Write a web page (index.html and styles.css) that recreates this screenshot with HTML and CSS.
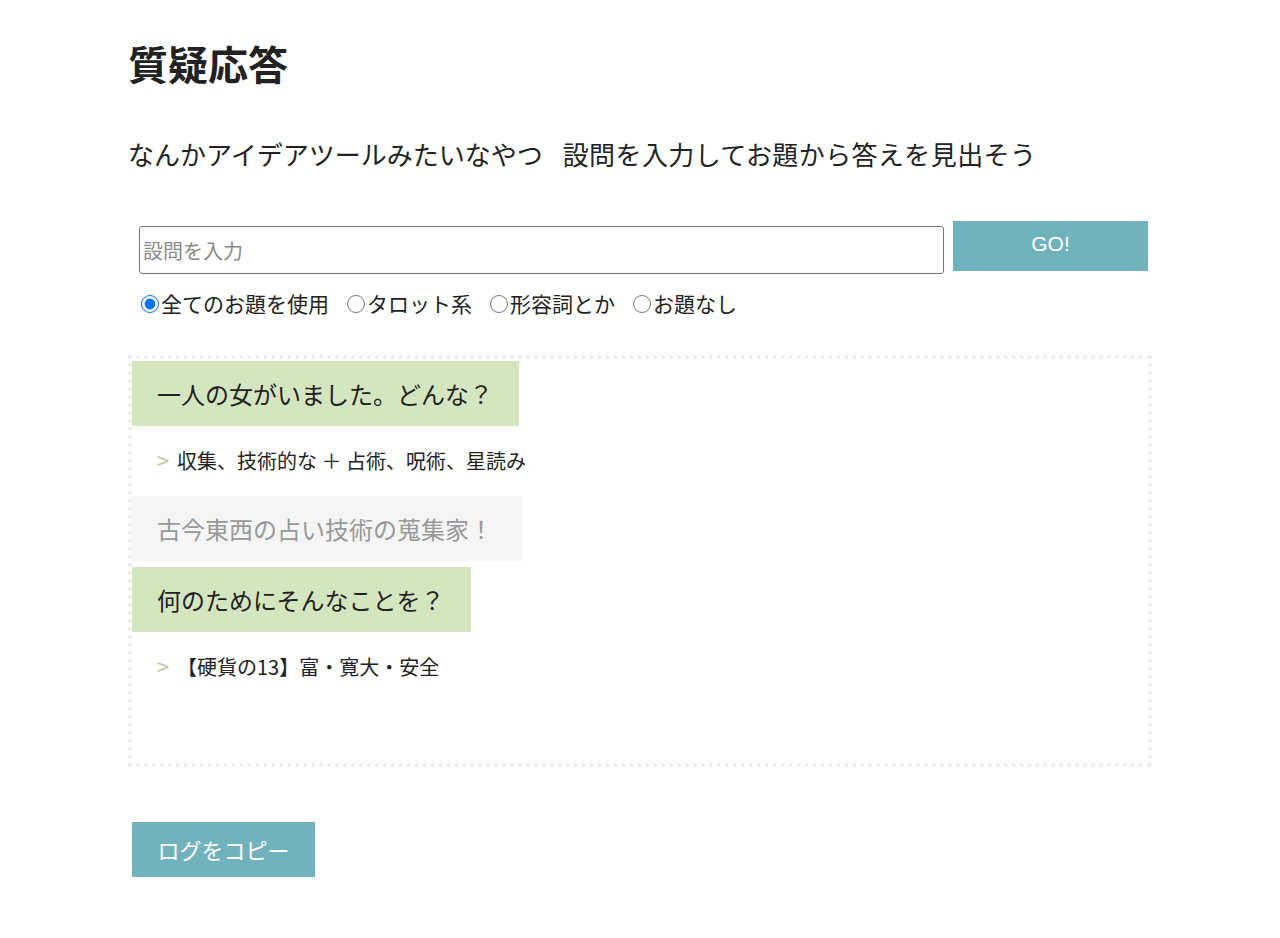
FILE: index.html
```html
<!DOCTYPE html>
<html lang="ja">
<head>
<meta charset="utf-8">
<title>質疑応答</title>
<link rel="stylesheet" href="styles.css">
</head>
<body>
<div class="page">
  <h1 class="title">質疑応答</h1>
  <p class="lead"><span>なんかアイデアツールみたいなやつ</span><span class="lead-b">設問を入力してお題から答えを見出そう</span></p>
  <div class="ask">
    <input class="ask-input" type="text" placeholder="設問を入力">
    <button class="go">GO!</button>
  </div>
  <div class="opts">
    <label class="opt"><input type="radio" name="t" checked>全てのお題を使用</label>
    <label class="opt"><input type="radio" name="t">タロット系</label>
    <label class="opt"><input type="radio" name="t">形容詞とか</label>
    <label class="opt"><input type="radio" name="t">お題なし</label>
  </div>
  <div class="log">
    <div class="q">一人の女がいました。どんな？</div>
    <div class="a"><span class="arrow">&gt;</span>収集、技術的な ＋ 占術、呪術、星読み</div>
    <div class="note">古今東西の占い技術の蒐集家！</div>
    <div class="q">何のためにそんなことを？</div>
    <div class="a"><span class="arrow">&gt;</span>【硬貨の13】富・寛大・安全</div>
  </div>
  <button class="copy">ログをコピー</button>
</div>
</body>
</html>
```
FILE: styles.css
```css
html, body {
  margin: 0;
  padding: 0;
  background: #fff;
}
body {
  font-family: "Noto Sans CJK JP", "Noto Sans", sans-serif;
  color: #222;
}
.page {
  width: 1024px;
  margin: 0 auto;
  padding-top: 30px;
}
.title {
  font-size: 40px;
  font-weight: 700;
  line-height: 66px;
  margin: 0;
  color: #222;
}
.lead {
  font-size: 26px;
  line-height: 40px;
  margin: 38px 0 0;
  display: flex;
  gap: 20px;
  color: #222;
}
.lead-b {
  letter-spacing: 0.4px;
}
.ask {
  display: flex;
  align-items: flex-start;
  margin: 47px 0 0 11px;
}
.ask-input {
  width: 805px;
  height: 48px;
  box-sizing: border-box;
  margin-top: 5px;
  border: 1px solid #767676;
  border-radius: 3px;
  padding: 0 3px;
  font-family: "Noto Sans CJK JP", sans-serif;
  font-size: 20px;
  color: #222;
}
.ask-input::placeholder {
  color: #8a8a8a;
}
.go {
  width: 195px;
  height: 50px;
  margin-left: 9px;
  border: 0;
  background: #72b2bc;
  color: #fff;
  font-family: "Liberation Sans", Arial, sans-serif;
  font-size: 21px;
  padding: 0 0 4px;
}
.opts {
  display: flex;
  margin: 14px 0 0 11px;
  font-size: 21px;
  line-height: 30px;
  gap: 16px;
}
.opt {
  display: flex;
  align-items: center;
}
.opt input {
  width: 18px;
  height: 18px;
  margin: 1px 2px 0 2px;
}
.log {
  margin-top: 37px;
  border: 4px dotted #ececec;
  min-height: 400px;
  padding: 2px 0;
}
.log > div {
  display: table;
}
.q {
  background: #d4e6c0;
  font-size: 24px;
  line-height: 39px;
  padding: 13px 26px 13px 25px;
  color: #222;
}
.note {
  background: #f5f5f5;
  color: #999;
  font-size: 24px;
  line-height: 39px;
  padding: 13px 30px 13px 25px;
}
.note + .q {
  margin-top: 6px;
}
.a {
  font-size: 20px;
  line-height: 29px;
  padding: 19px 25px 21px;
  color: #222;
}
.arrow {
  display: inline-block;
  width: 20px;
  font-size: 22px;
  color: #b8cda6;
}
.copy {
  display: block;
  margin: 55px 0 0 4px;
  width: 183px;
  height: 55px;
  border: 0;
  background: #72b2bc;
  color: #fff;
  font-family: "Noto Sans CJK JP", sans-serif;
  font-size: 22px;
  padding: 0 0 2px;
}
```
